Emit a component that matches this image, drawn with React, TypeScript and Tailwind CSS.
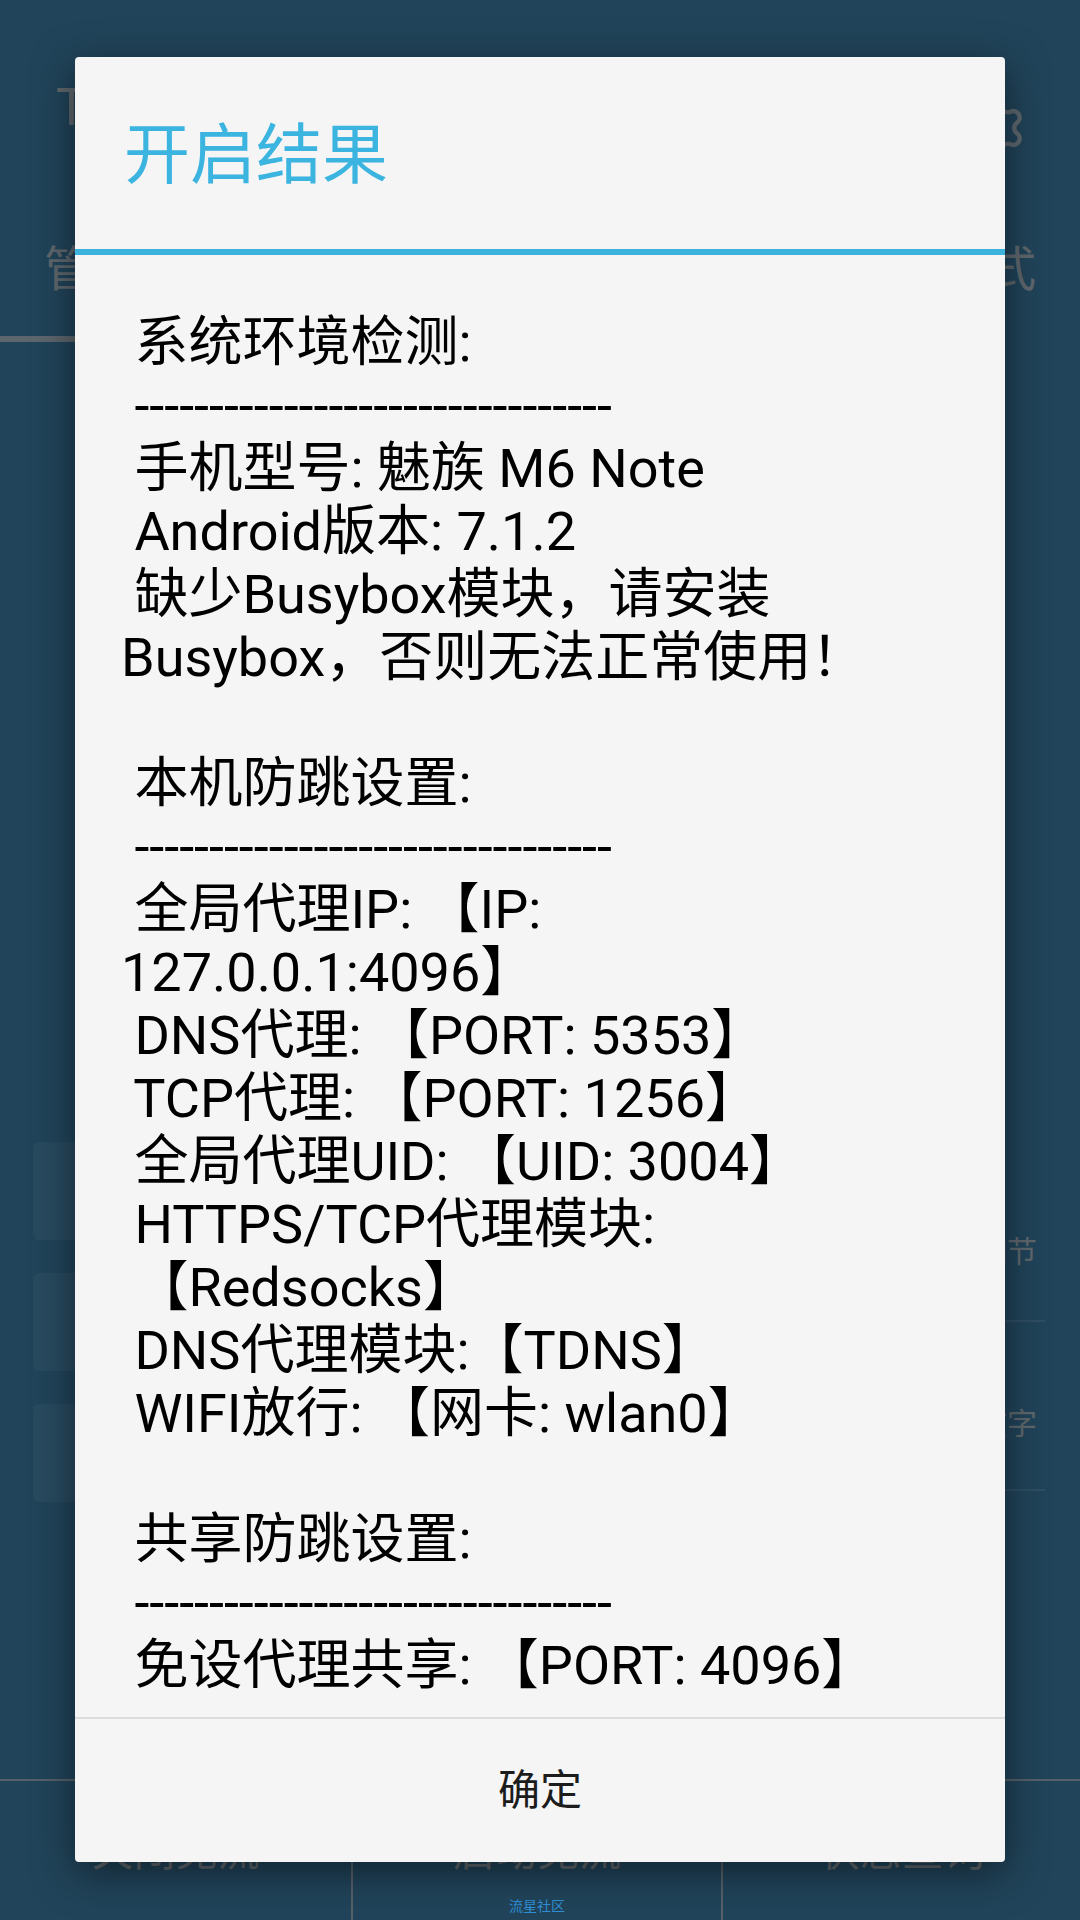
import React from "react";
import { Settings } from "lucide-react";

const DASHES = "-".repeat(32);

const lines = [
  " 系统环境检测:",
  " " + DASHES,
  " 手机型号: 魅族 M6 Note",
  " Android版本: 7.1.2",
  " 缺少Busybox模块，请安装",
  "Busybox，否则无法正常使用！",
  "",
  " 本机防跳设置:",
  " " + DASHES,
  " 全局代理IP: 【IP:",
  "127.0.0.1:4096】",
  " DNS代理: 【PORT: 5353】",
  " TCP代理: 【PORT: 1256】",
  " 全局代理UID: 【UID: 3004】",
  " HTTPS/TCP代理模块:",
  " 【Redsocks】",
  " DNS代理模块:【TDNS】",
  " WIFI放行: 【网卡: wlan0】",
  "",
  " 共享防跳设置:",
  " " + DASHES,
  " 免设代理共享: 【PORT: 4096】",
];

const App = () => {
  return (
    <div className="relative w-[1080px] h-[1920px] overflow-hidden bg-[#21445a] font-[family-name:Roboto,'Noto_Sans_CJK_SC',sans-serif]">
      {/* app behind the dialog (dimmed) */}
      <div className="flex flex-col h-full text-[#5f686e]">
        {/* header */}
        <div className="h-[200px] flex items-center justify-between pl-[56px] pr-[52px] pt-[16px]">
          <span className="text-[52px] leading-none">Tiny防跳</span>
          <Settings className="w-[66px] h-[66px] mt-[40px]" strokeWidth={1.6} />
        </div>

        {/* tabs */}
        <div className="h-[136px] flex items-center justify-between px-[44px] pt-[4px] text-[48px]">
          <span>管理</span>
          <span>设置</span>
          <span>模式</span>
        </div>
        <div className="h-[6px] w-[360px] bg-[#5c666d]" />

        {/* content */}
        <div className="flex-1 flex pt-[800px] pl-[33px] pr-[35px] gap-[60px]">
          <div className="w-[460px] flex flex-col gap-[33px]">
            <div className="h-[98px] rounded-md bg-[#284a5f]" />
            <div className="h-[98px] rounded-md bg-[#284a5f]" />
            <div className="h-[98px] rounded-md bg-[#284a5f]" />
          </div>
          <div className="flex-1 flex flex-col pt-[40px]">
            <div className="h-[140px] flex items-center justify-end border-b-2 border-[#2f4e62] text-[30px] pr-[8px]">
              高级设置细节
            </div>
            <div className="h-[169px] flex items-center justify-end border-b-2 border-[#2f4e62] text-[30px] pr-[8px] pt-[36px]">
              防跳模式文字
            </div>
          </div>
        </div>

        {/* bottom bar */}
        <div className="h-[141px] border-t-2 border-[#56616a] flex text-[42px] leading-[42px]">
          <div className="w-[353px] border-r-2 border-[#56616a] flex justify-center pt-[50px]">
            关闭免流
          </div>
          <div className="w-[370px] border-r-2 border-[#56616a] flex flex-col items-center pt-[50px]">
            <span>启动免流</span>
            <span className="mt-[26px] text-[14px] leading-[14px] text-[#2f8fd6]">流星社区</span>
          </div>
          <div className="flex-1 flex justify-center pt-[50px]">状态查询</div>
        </div>
      </div>

      {/* dialog */}
      <div className="absolute left-[75px] top-[57px] w-[930px] h-[1805px] flex flex-col rounded-[4px] bg-[#f5f5f5] shadow-[0_10px_40px_rgba(0,0,0,0.5)] overflow-hidden">
        <div className="h-[192px] flex items-center pl-[49px] pt-[6px]">
          <span className="text-[66px] leading-none text-[#3cb4e0]">开启结果</span>
        </div>
        <div className="h-[6px] bg-[#3bb3dc]" />

        <div className="h-[1462px] overflow-hidden pt-[56px] pl-[46px] text-[54px] leading-[63px] text-black">
          {lines.map((line, i) => (
            <div key={i} className="h-[63px] whitespace-pre">
              {line}
            </div>
          ))}
        </div>

        <div className="h-[2px] bg-[#dcdcdc]" />
        <div className="flex-1 flex items-center justify-center">
          <span className="text-[42px] leading-none text-[#1c1c1c]">确定</span>
        </div>
      </div>
    </div>
  );
};

export default App;
